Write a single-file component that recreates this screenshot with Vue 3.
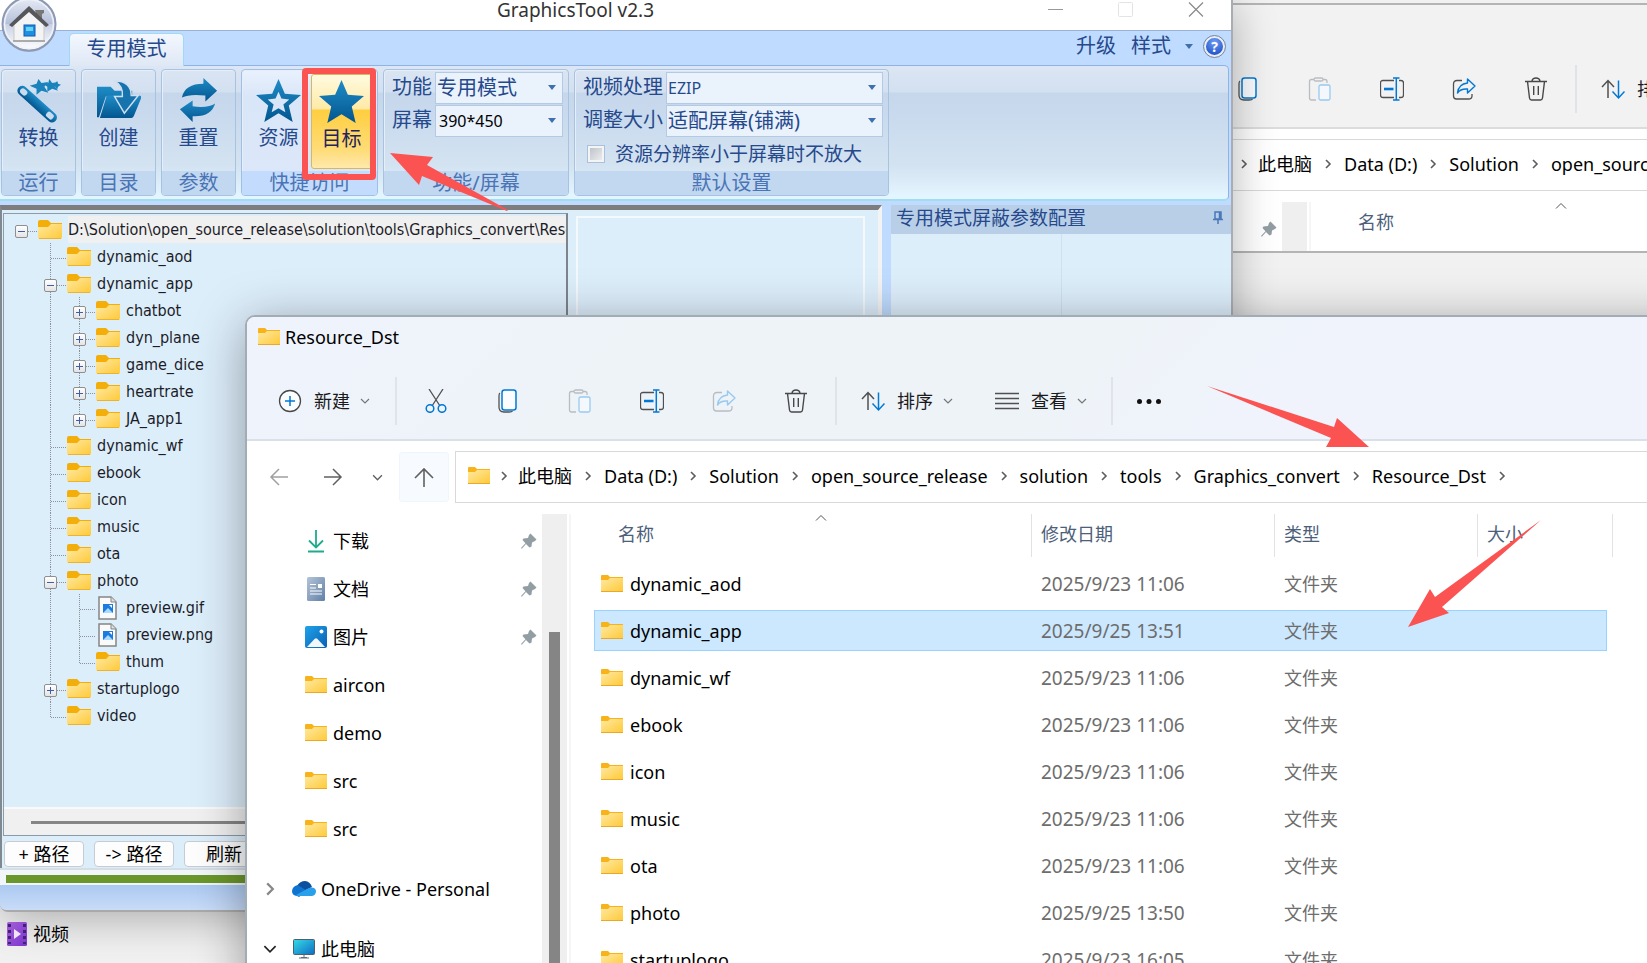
<script setup>
import { ref } from 'vue'

const ribbonGroups = [
  { caption: '运行', buttons: [{ icon: 'wand', label: '转换' }] },
  { caption: '目录', buttons: [{ icon: 'create', label: '创建' }] },
  { caption: '参数', buttons: [{ icon: 'reset', label: '重置' }] },
  {
    caption: '快捷访问',
    active: true,
    buttons: [
      { icon: 'star-outline', label: '资源' },
      { icon: 'star', label: '目标', hot: true },
    ],
  },
]

// Guide codes: blank ' ', through line '|', branch 't', last branch 'l',
// and for expanders: root 'r', mid-level '-' / '+', last in its level 'L'.
const tree = [
  { guides: 'r', icon: 'tree-folder', name: 'D:\\Solution\\open_source_release\\solution\\tools\\Graphics_convert\\Resource_Dst', root: true },
  { guides: ' t', icon: 'tree-folder', name: 'dynamic_aod' },
  { guides: ' -', icon: 'tree-folder', name: 'dynamic_app' },
  { guides: ' |+', icon: 'tree-folder', name: 'chatbot' },
  { guides: ' |+', icon: 'tree-folder', name: 'dyn_plane' },
  { guides: ' |+', icon: 'tree-folder', name: 'game_dice' },
  { guides: ' |+', icon: 'tree-folder', name: 'heartrate' },
  { guides: ' |L', icon: 'tree-folder', name: 'JA_app1' },
  { guides: ' t', icon: 'tree-folder', name: 'dynamic_wf' },
  { guides: ' t', icon: 'tree-folder', name: 'ebook' },
  { guides: ' t', icon: 'tree-folder', name: 'icon' },
  { guides: ' t', icon: 'tree-folder', name: 'music' },
  { guides: ' t', icon: 'tree-folder', name: 'ota' },
  { guides: ' -', icon: 'tree-folder', name: 'photo' },
  { guides: ' |t', icon: 'image-file', name: 'preview.gif' },
  { guides: ' |t', icon: 'image-file', name: 'preview.png' },
  { guides: ' |l', icon: 'tree-folder', name: 'thum' },
  { guides: ' +', icon: 'tree-folder', name: 'startuplogo' },
  { guides: ' l', icon: 'tree-folder', name: 'video' },
]
const isExpander = (g) => 'r-+L'.includes(g)
const isPlus = (g) => '+L'.includes(g)

const path = ['此电脑', 'Data (D:)', 'Solution', 'open_source_release', 'solution', 'tools', 'Graphics_convert', 'Resource_Dst']
const quick = [
  { icon: 'download', name: '下载', pin: true },
  { icon: 'document', name: '文档', pin: true },
  { icon: 'picture', name: '图片', pin: true },
  { icon: 'folder', name: 'aircon' },
  { icon: 'folder', name: 'demo' },
  { icon: 'folder', name: 'src' },
  { icon: 'folder', name: 'src' },
]
const files = [
  { name: 'dynamic_aod', date: '2025/9/23 11:06' },
  { name: 'dynamic_app', date: '2025/9/25 13:51', selected: true },
  { name: 'dynamic_wf', date: '2025/9/23 11:06' },
  { name: 'ebook', date: '2025/9/23 11:06' },
  { name: 'icon', date: '2025/9/23 11:06' },
  { name: 'music', date: '2025/9/23 11:06' },
  { name: 'ota', date: '2025/9/23 11:06' },
  { name: 'photo', date: '2025/9/25 13:50' },
  { name: 'startuplogo', date: '2025/9/23 16:05' },
]
const explorers = [
  { id: 'back', path: path.slice(0, 4), quick: [{ icon: 'folder', name: '', pin: true }], files: [], canShare: true },
  { id: 'front', path, quick, files, canShare: false },
]
const tools = (win) => [
  { icon: 'cut', label: '剪切' },
  { icon: 'copy', label: '复制' },
  { icon: 'paste', label: '粘贴', off: true },
  { icon: 'rename', label: '重命名' },
  { icon: 'share', label: '共享', off: !win.canShare },
  { icon: 'trash', label: '删除' },
]

const mode = ref('专用模式')
const screen = ref('390*450')
const codec = ref('EZIP')
const fit = ref('适配屏幕(铺满)')
const keepSize = ref(false)
</script>

<template>
  <svg class="defs" aria-hidden="true">
    <defs>
      <linearGradient id="g-blue" x1="0" y1="0" x2="0" y2="1"><stop offset="0" stop-color="#1f8cc6" /><stop offset="1" stop-color="#03558f" /></linearGradient>
      <linearGradient id="g-folder" x1="0" y1="0" x2="1" y2="1"><stop offset="0" stop-color="#ffe9a2" /><stop offset="1" stop-color="#ffc937" /></linearGradient>
      <linearGradient id="g-doc" x1="0" y1="0" x2="1" y2="1"><stop offset="0" stop-color="#b4c4d8" /><stop offset="1" stop-color="#6080a6" /></linearGradient>
      <linearGradient id="g-pic" x1="0" y1="0" x2="1" y2="1"><stop offset="0" stop-color="#1fa3ea" /><stop offset="1" stop-color="#0a5fb4" /></linearGradient>
      <linearGradient id="g-pc" x1="0" y1="0" x2="1" y2="1"><stop offset="0" stop-color="#35dbe6" /><stop offset="1" stop-color="#0f6cc4" /></linearGradient>
      <linearGradient id="g-video" x1="0" y1="0" x2="1" y2="1"><stop offset="0" stop-color="#a45fd6" /><stop offset="1" stop-color="#7a35cf" /></linearGradient>
      <linearGradient id="g-orb" x1="0" y1="0" x2="0" y2="1"><stop offset="0" stop-color="#e8ecf6" /><stop offset="0.5" stop-color="#b4bfd8" /><stop offset="0.51" stop-color="#c9d2e6" /><stop offset="1" stop-color="#ffffff" /></linearGradient>
    </defs>
    <symbol id="orb" viewBox="0 0 58 58">
      <circle cx="29" cy="30" r="27" fill="#7f8798" opacity="0.5" />
      <circle cx="29" cy="29" r="26.5" fill="url(#g-orb)" stroke="#8d99b0" stroke-width="2" />
      <circle cx="29" cy="29" r="24.500" fill="none" stroke="#eef2fa" stroke-width="1.500" />
      <path d="M14 29 29 15l15 14v17H14Z" fill="#f4f4f4" stroke="#c9c9c9" />
      <path d="M35 15h9v3l-2 1v8l-5-5Z" fill="#777" />
      <path d="M9 30 29 11l20 19-3 2-17-15-17 15Z" fill="#55575a" />
      <path d="M13 46h32" stroke="#9a9a9a" stroke-width="1.500" />
      <rect x="24" y="30" width="11" height="11" fill="#1f8fe0" stroke="#1458b0" />
      <rect x="26" y="32" width="7" height="4" fill="#68d2f6" />
    </symbol>
    <symbol id="wand" viewBox="0 0 46 46">
      <g transform="rotate(42 22 27)">
        <rect x="-4" y="22" width="51" height="10" rx="5" fill="url(#g-blue)" />
        <rect x="-1" y="24" width="8" height="6" rx="3" fill="#c9dbee" />
        <rect x="35" y="24" width="8" height="6" rx="2" fill="#c9dbee" />
      </g>
      <g fill="#1a82bc">
        <path d="m23 1 3 4 7-1-4 5 4 6-7-2-5 4 0-6-7-3 7-2Z" />
        <path d="m34 1 3 4 6-1-4 4 4 5-6-2-5 3 0-5-4-3 5-1Z" />
        <path d="m42 3 1 3 3 1-3 2-1 3-2-3-3-1 3-2Z" />
      </g>
    </symbol>
    <symbol id="create" viewBox="0 0 46 46">
      <path d="M1 9h14l4 4h18v6H10L3 40H1Z" fill="url(#g-blue)" />
      <path d="M11 18h33q3 0 2 3l-7 17q-1 3-4 3H4Z" fill="url(#g-blue)" />
      <path d="M19 3q17 0 17 15h7L29 36 19 19h8q1-11-8-16Z" fill="#1673ad" stroke="#cfdff0" stroke-width="1.500" />
    </symbol>
    <symbol id="reset" viewBox="0 0 46 46">
      <path d="M6 20Q9 6 28 6V0l14 13-12 11v-6Q14 16 6 20Z" fill="url(#g-blue)" />
      <path d="M40 26Q36 40 17 39v6L4 32l13-9v6q16 2 23-3Z" fill="url(#g-blue)" />
    </symbol>
    <symbol id="star" viewBox="0 0 46 46">
      <path d="m23 1 6.500 15L46 17.500 33.500 28 37.500 45 23 36 8.500 45l4-17L0 17.500 16.500 16Z" fill="url(#g-blue)" />
    </symbol>
    <symbol id="star-outline" viewBox="0 0 46 46">
      <path fill-rule="evenodd" d="m23 1 6.500 15L46 17.500 33.500 28 37.500 45 23 36 8.500 45l4-17L0 17.500 16.500 16ZM23 14l-3 7-8 1 6 5-2 8 7-4 7 4-2-8 6-5-8-1Z" fill="url(#g-blue)" />
    </symbol>
    <symbol id="pushpin" viewBox="0 0 12 14">
      <path d="M3 1h6v7H3ZM1 8.500h10M6 9v4M7.500 1v7" fill="none" stroke="#4a78b8" stroke-width="1.500" />
    </symbol>
    <symbol id="tree-folder" viewBox="0 0 24 20">
      <path d="M0 2q0-2 2-2h8l3 3h11v6H0Z" fill="#f4ae0a" />
      <path d="M0 7h10l3-3h11v13q0 2-2 2H2q-2 0-2-2Z" fill="url(#g-folder)" />
      <path d="M1 18.500h22" stroke="#eeb32c" />
    </symbol>
    <symbol id="folder" viewBox="0 0 22 18">
      <path d="M0 1q0-1 1-1h6l2 2h13v5H0Z" fill="#f8b31a" />
      <path d="M0 5h7l2-2h13v14H0Z" fill="url(#g-folder)" />
      <path d="M0 16.500h22" stroke="#e9a827" />
    </symbol>
    <symbol id="image-file" viewBox="0 0 24 24">
      <path d="M3 1h12l5 5v17H3Z" fill="#fafafa" stroke="#858585" stroke-width="1.500" />
      <path d="M15 1v5h5" fill="#ddd" stroke="#858585" />
      <rect x="7" y="8" width="10" height="9" fill="#1c7be0" />
      <path d="m7 17 5-5 5 5Z" fill="#a8dcff" />
      <path d="M13 9h3v3Z" fill="#fff" />
    </symbol>
    <symbol id="plus-circle" viewBox="0 0 24 24">
      <circle cx="12" cy="12" r="10.500" fill="#fafcff" stroke="#484848" stroke-width="1.300" />
      <path d="M12 7v10M7 12h10" stroke="#0078d4" stroke-width="1.500" />
    </symbol>
    <symbol id="cut" viewBox="0 0 24 24" fill="none">
      <path d="m5 0 11 17M19 0 8 17" stroke="#505050" stroke-width="1.300" />
      <circle cx="6" cy="19.500" r="3.800" stroke="#0078d4" stroke-width="1.500" />
      <circle cx="18" cy="19.500" r="3.800" stroke="#0078d4" stroke-width="1.500" />
    </symbol>
    <symbol id="copy" viewBox="0 0 24 24" fill="none">
      <path d="M4 4q-1 .5-1 3v11q0 5 5 5h5q3 0 3.500-1" stroke="#505050" stroke-width="1.300" />
      <rect x="6" y="1" width="14" height="20" rx="2.500" fill="#fafcff" stroke="#0078d4" stroke-width="1.500" />
    </symbol>
    <symbol id="paste" viewBox="0 0 24 24" fill="none">
      <path d="M8 23H3.500q-2 0-2-2V4.500q0-2 2-2H6M15 2.500h2q2 0 2 2V6" stroke="#b9bdc2" stroke-width="1.300" />
      <rect x="6" y="1" width="9" height="3" rx="1.500" stroke="#b9bdc2" stroke-width="1.300" />
      <rect x="11" y="8" width="11" height="15" rx="1.500" fill="#f4f8fd" stroke="#99c9ee" stroke-width="1.300" />
    </symbol>
    <symbol id="rename" viewBox="0 0 24 24" fill="none">
      <path d="M14 3.500H3q-2.500 0-2.500 2.500v12Q.5 20.500 3 20.500h11M19 3.500h2q2.500 0 2.500 2.500v12q0 2.500-2.500 2.500h-2" stroke="#505050" stroke-width="1.300" />
      <path d="M13 1h6.500M13 23h6.500M16.300 1v22" stroke="#0078d4" stroke-width="1.500" />
      <path d="M4 12h9.500" stroke="#0078d4" stroke-width="2.600" />
    </symbol>
    <symbol id="share" viewBox="0 0 24 24" fill="none">
      <path d="M10 3.500H5Q1.500 3.500 1.500 7v12q0 3 3 3h12q3.500 0 3.500-3v-2" stroke="#505050" stroke-width="1.300" />
      <path d="m15.500 2 7.500 7-7.500 7v-4q-7-.5-10 4 1-9 10-10Z" stroke="#0078d4" stroke-width="1.400" stroke-linejoin="round" />
    </symbol>
    <symbol id="share-off" viewBox="0 0 24 24" fill="none">
      <path d="M10 3.500H5Q1.500 3.500 1.500 7v12q0 3 3 3h12q3.500 0 3.500-3v-2" stroke="#b9bdc2" stroke-width="1.300" />
      <path d="m15.500 2 7.500 7-7.500 7v-4q-7-.5-10 4 1-9 10-10Z" stroke="#99c9ee" stroke-width="1.400" stroke-linejoin="round" />
    </symbol>
    <symbol id="trash" viewBox="0 0 24 24" fill="none" stroke="#484848" stroke-width="1.400">
      <path d="M1 4.500h22M3.500 4.500l2 16.500q.3 2 2 2h9q1.700 0 2-2l2-16.500M8 4q.5-3 4-3t4 3M9.700 9v9M14.300 9v9" />
    </symbol>
    <symbol id="sort" viewBox="0 0 24 24" fill="none" stroke-width="1.500">
      <path d="M7 21V4M1 10l6-6.500 6 6.500" stroke="#505050" />
      <path d="M17.500 3.500V21M11.500 14.500l6 6.500 6-6.500" stroke="#0078d4" />
    </symbol>
    <symbol id="lines" viewBox="0 0 24 24">
      <path d="M0 4.500h24M0 9.500h24M0 14.500h24M0 19.500h24" stroke="#505050" stroke-width="1.500" />
    </symbol>
    <symbol id="dots" viewBox="0 0 24 24"><g fill="#111"><circle cx="2.500" cy="12.500" r="2.500" /><circle cx="12" cy="12.500" r="2.500" /><circle cx="21.500" cy="12.500" r="2.500" /></g></symbol>
    <symbol id="chev-down" viewBox="0 0 10 10"><path d="m1 3 4 4 4-4" fill="none" stroke="currentColor" stroke-width="1.200" /></symbol>
    <symbol id="chev-right" viewBox="0 0 10 10"><path d="m3 1 4 4-4 4" fill="none" stroke="currentColor" stroke-width="1.600" /></symbol>
    <symbol id="arrow-left" viewBox="0 0 20 20"><path d="M19 10H2M10 2l-8 8 8 8" fill="none" stroke="currentColor" stroke-width="1.500" /></symbol>
    <symbol id="arrow-right" viewBox="0 0 20 20"><path d="M1 10h17M10 2l8 8-8 8" fill="none" stroke="currentColor" stroke-width="1.500" /></symbol>
    <symbol id="arrow-up" viewBox="0 0 20 20"><path d="M10 20V2M1 11l9-9 9 9" fill="none" stroke="currentColor" stroke-width="1.600" /></symbol>
    <symbol id="pin" viewBox="0 0 16 16">
      <path d="m9.500.5 6 6-1.500 1.500-3 1.500-.500 4-2 1L5 11 .8 15.800 0 15l4.500-4.800L1.500 7l1-1.500 4.500-.5 1-3Z" fill="#929da4" />
    </symbol>
    <symbol id="download" viewBox="0 0 22 24">
      <path d="M11 1v17M4 11.500l7 7 7-7M3 22.500h16" fill="none" stroke="#1fab8c" stroke-width="1.800" />
    </symbol>
    <symbol id="document" viewBox="0 0 22 24">
      <rect x="2" width="18" height="24" rx="1.500" fill="url(#g-doc)" />
      <path d="M5 7.500h6M5 11h6M5 14h12M5 17h12" stroke="#fff" stroke-width="1.200" />
      <rect x="13" y="7" width="4" height="4" fill="#fff" />
    </symbol>
    <symbol id="picture" viewBox="0 0 22 22">
      <rect width="22" height="22" rx="2" fill="url(#g-pic)" />
      <path d="m2 21 7.500-8q1.500-1.500 3 0L20 21Z" fill="#f2f7fc" />
      <circle cx="16.500" cy="5.500" r="2" fill="#fff" />
    </symbol>
    <symbol id="cloud" viewBox="0 0 24 16">
      <path d="M5 5Q8 0 13 0q5 .5 7 6l-8 4Z" fill="#0a4fa0" />
      <path d="M5 15q-5-.5-5-5 .5-5 6-6l9 6-8 6Z" fill="#0f74d0" />
      <path d="m4 14 11-6q3-2 5-1.500 4 .5 4 4-.5 4-4 4.500H7q-2 0-3-1Z" fill="#2a9fea" />
    </symbol>
    <symbol id="pc" viewBox="0 0 22 20">
      <rect x=".5" y=".5" width="21" height="15" rx="1" fill="url(#g-pc)" stroke="#4d6070" />
      <path d="M8 18.500h6M6 19h10M11 16v3" stroke="#5f6f7a" />
    </symbol>
    <symbol id="video" viewBox="0 0 20 24">
      <rect width="20" height="24" rx="1.500" fill="url(#g-video)" />
      <path d="M2.500 2v20M17.500 2v20" stroke="#42207a" stroke-width="3" stroke-dasharray="3 3" />
      <path d="m7 7 7 5-7 5Z" fill="#efe6fa" />
    </symbol>
  </svg>

  <main class="desktop">
    <a class="desk-item" href="#"><svg width="20" height="24"><use href="#video" /></svg>视频</a>

    <section v-for="win in explorers" :key="win.id" class="explorer" :class="win.id">
      <header class="ex-head">
        <div class="ex-title"><svg width="22" height="18"><use href="#folder" /></svg><span v-if="win.files.length">Resource_Dst</span></div>
        <div class="ex-tools">
          <button class="ex-menu new"><svg width="24" height="24"><use href="#plus-circle" /></svg><template v-if="win.files.length">新建</template><svg class="chev" width="10" height="10"><use href="#chev-down" /></svg></button>
          <i class="sep"></i>
          <button v-for="t in tools(win)" :key="t.icon" class="tool" :disabled="t.off" :aria-label="t.label">
            <svg width="24" height="24"><use :href="t.icon === 'share' && t.off ? '#share-off' : '#' + t.icon" /></svg>
          </button>
          <i class="sep"></i>
          <button class="ex-menu sort"><svg width="24" height="24"><use href="#sort" /></svg>排序<svg class="chev" width="10" height="10"><use href="#chev-down" /></svg></button>
          <template v-if="win.files.length">
            <button class="ex-menu view"><svg width="24" height="24"><use href="#lines" /></svg>查看<svg class="chev" width="10" height="10"><use href="#chev-down" /></svg></button>
            <i class="sep"></i>
            <button class="tool more" aria-label="更多"><svg width="24" height="24"><use href="#dots" /></svg></button>
          </template>
        </div>
      </header>

      <nav class="ex-nav">
        <button class="nav-btn faint" aria-label="后退"><svg width="20" height="20"><use href="#arrow-left" /></svg></button>
        <button class="nav-btn" aria-label="前进"><svg width="20" height="20"><use href="#arrow-right" /></svg></button>
        <button class="nav-btn small" aria-label="最近"><svg width="11" height="11"><use href="#chev-down" /></svg></button>
        <button class="nav-btn up" aria-label="向上"><svg width="20" height="20"><use href="#arrow-up" /></svg></button>
        <div class="address">
          <svg width="22" height="18"><use href="#folder" /></svg>
          <svg class="crumb-chev lead" width="10" height="10"><use href="#chev-right" /></svg>
          <template v-for="p in win.path" :key="p">
            <a href="#">{{ p }}</a>
            <svg class="crumb-chev" width="10" height="10"><use href="#chev-right" /></svg>
          </template>
        </div>
      </nav>

      <div class="ex-body">
        <aside class="side">
          <a v-for="(q, i) in win.quick" :key="i" class="side-row" href="#">
            <svg width="22" height="24"><use :href="'#' + q.icon" /></svg><span>{{ q.name }}</span>
            <svg v-if="q.pin" class="pin" width="16" height="16"><use href="#pin" /></svg>
          </a>
          <template v-if="win.files.length">
            <a class="side-row drive" href="#">
              <svg class="twist" width="14" height="14"><use href="#chev-right" /></svg>
              <svg width="24" height="16"><use href="#cloud" /></svg><span>OneDrive - Personal</span>
            </a>
            <a class="side-row drive" href="#">
              <svg class="twist open" width="14" height="14"><use href="#chev-down" /></svg>
              <svg width="24" height="20"><use href="#pc" /></svg><span>此电脑</span>
            </a>
          </template>
        </aside>
        <div class="track"><div class="thumb"></div></div>
        <div class="list">
          <table>
            <colgroup><col class="c-name" /><col class="c-date" /><col class="c-type" /><col class="c-size" /></colgroup>
            <thead>
              <tr>
                <th class="first">名称<svg class="caret" width="12" height="8" viewBox="0 0 12 8"><path d="m1 6.500 5-5 5 5" fill="none" stroke="#555" /></svg></th>
                <template v-if="win.files.length"><th>修改日期</th><th>类型</th><th>大小</th></template>
              </tr>
            </thead>
            <tbody>
              <tr v-for="f in win.files" :key="f.name" :class="{ selected: f.selected }">
                <td class="name"><div><svg width="22" height="18"><use href="#folder" /></svg>{{ f.name }}</div></td>
                <td class="date">{{ f.date }}</td>
                <td>文件夹</td>
                <td></td>
              </tr>
            </tbody>
          </table>
        </div>
      </div>
    </section>

    <section class="app">
      <header class="titlebar">
        <h1>GraphicsTool v2.3</h1>
        <button class="win-btn" aria-label="最小化"><svg width="16" height="16"><path d="M0 8.500h15" stroke="#999" /></svg></button>
        <button class="win-btn" aria-label="最大化"><svg width="16" height="16"><rect x=".5" y="1.500" width="14" height="14" rx="1" fill="none" stroke="#e3e3e3" /></svg></button>
        <button class="win-btn" aria-label="关闭"><svg width="16" height="16"><path d="m1 1.500 14 14M15 1.500l-14 14" stroke="#8a8a8a" stroke-width="1.200" /></svg></button>
      </header>
      <button class="orb" aria-label="主菜单"><svg width="58" height="58"><use href="#orb" /></svg></button>

      <div class="tabs">
        <button class="tab">专用模式</button>
        <div class="tab-extra">
          <button>升级</button>
          <button class="style-btn">样式<i class="tri"></i></button>
          <button class="help" aria-label="帮助">?</button>
        </div>
      </div>

      <div class="ribbon">
        <section v-for="g in ribbonGroups" :key="g.caption" class="group" :class="{ active: g.active }">
          <div class="group-body">
            <button v-for="b in g.buttons" :key="b.label" class="big" :class="{ hot: b.hot }">
              <svg width="45" height="45"><use :href="'#' + b.icon" /></svg>{{ b.label }}
            </button>
          </div>
          <footer>{{ g.caption }}</footer>
        </section>

        <section class="group g-screen">
          <div class="fields">
            <label for="f-mode">功能</label>
            <div class="combo"><select id="f-mode" v-model="mode"><option>专用模式</option></select><i class="tri"></i></div>
            <label for="f-screen">屏幕</label>
            <div class="combo"><select id="f-screen" v-model="screen" class="num"><option>390*450</option></select><i class="tri"></i></div>
          </div>
          <footer>功能/屏幕</footer>
        </section>

        <section class="group g-default">
          <div class="fields">
            <label for="f-codec">视频处理</label>
            <div class="combo"><select id="f-codec" v-model="codec" class="latin"><option>EZIP</option></select><i class="tri"></i></div>
            <label for="f-fit">调整大小</label>
            <div class="combo"><select id="f-fit" v-model="fit"><option>适配屏幕(铺满)</option></select><i class="tri"></i></div>
            <label class="check"><input v-model="keepSize" type="checkbox" />资源分辨率小于屏幕时不放大</label>
          </div>
          <footer>默认设置</footer>
        </section>
      </div>

      <div class="client">
        <div class="tree-col">
          <div class="tree-box">
            <ul class="tree">
              <li v-for="n in tree" :key="n.name" :class="{ root: n.root }">
                <span v-for="(g, i) in n.guides" :key="i" class="cell">
                  <svg width="29" height="27" fill="none" stroke="#8c9299" stroke-dasharray="1 1">
                    <path v-if="'|t-+'.includes(g)" d="M13.500 0v27" />
                    <path v-if="'lL'.includes(g)" d="M13.500 0v15" />
                    <path v-if="'tlr-+L'.includes(g)" d="M14 15.500h15" />
                  </svg>
                  <button v-if="isExpander(g)" class="twisty" :aria-label="isPlus(g) ? '展开' : '折叠'">
                    <svg width="9" height="9"><path d="M1 4.500h7" stroke="#3f5fa8" /><path v-if="isPlus(g)" d="M4.500 1v7" stroke="#3f5fa8" /></svg>
                  </button>
                </span>
                <svg class="node-icon" width="24" :height="n.icon === 'image-file' ? 24 : 20"><use :href="'#' + n.icon" /></svg>
                <span class="node-name">{{ n.name }}</span>
              </li>
            </ul>
            <div class="hscroll"><div></div></div>
          </div>
          <div class="path-btns">
            <button>+ 路径</button>
            <button>-&gt; 路径</button>
            <button>刷新</button>
          </div>
        </div>
        <div class="preview"><div></div></div>
        <div class="config">
          <header>专用模式屏蔽参数配置<svg width="12" height="14"><use href="#pushpin" /></svg></header>
          <div class="config-body"><div></div><div></div></div>
        </div>
      </div>
      <div class="progress"><div></div></div>
      <div class="status"></div>
    </section>

    <svg class="marks" aria-hidden="true">
      <rect x="305" y="71" width="68" height="106" rx="1" fill="none" stroke="#fb5352" stroke-width="6" />
      <g fill="#fb5352">
        <path d="M390 153l43 4-6 8 81 45-1 1-85-35-3 9Z" />
        <path d="M1207 386l127 41 3-9 32 29-43 0 5-9Z" />
        <path d="M1541 520l-99 87 7 6-41 14 22-38 5 8Z" />
      </g>
    </svg>
  </main>
</template>

<style>
body {
  margin: 0;
  overflow: hidden;
}
</style>

<style scoped>
* {
  box-sizing: border-box;
}
button {
  border: 0;
  padding: 0;
  margin: 0;
  background: none;
  font: inherit;
  color: inherit;
}
a {
  color: inherit;
  text-decoration: none;
}
svg {
  display: block;
  flex: none;
}
.defs {
  position: absolute;
  width: 0;
  height: 0;
}
.desktop {
  position: relative;
  height: 100vh;
  overflow: hidden;
  background: #f1f1f1;
  font: 18px/24px "Noto Sans", "Noto Sans CJK SC", sans-serif;
  color: #000;
}
.desk-item {
  position: absolute;
  left: 7px;
  top: 922px;
  display: flex;
  gap: 6px;
  z-index: 2;
}
.marks {
  position: absolute;
  inset: 0;
  width: 100%;
  height: 100%;
  z-index: 5;
  pointer-events: none;
}

/* Explorer windows */
.explorer {
  position: absolute;
  width: 100vw;
  border: 2px solid #b4b4b4;
  background: #fff;
  overflow: hidden;
}
.explorer.back {
  left: 985px;
  top: 3px;
  height: 250px;
}
.explorer.front {
  left: 245px;
  top: 315px;
  height: 1000px;
  border-color: #a2acb4;
  border-radius: 10px;
  box-shadow: 0 8px 50px rgba(0, 0, 0, 0.36);
  z-index: 3;
}
.ex-head {
  height: 124px;
  border-bottom: 2px solid #dcdcdc;
  background: #f2f2f2;
}
.front .ex-head {
  border-color: #dae0e7;
  background: linear-gradient(135deg, #eff3fc 0, #eef3f8 25%, #eef3f8 50%, #f0f3fc 65%);
}
.ex-title {
  display: flex;
  align-items: center;
  gap: 5px;
  height: 40px;
  padding-left: 11px;
}
.ex-tools {
  display: flex;
  align-items: center;
  height: 48px;
  margin-top: 20px;
}
.sep {
  width: 2px;
  height: 48px;
  background: #e0e4ea;
}
.tool {
  display: flex;
  justify-content: center;
  width: 72px;
}
.sep + .tool {
  margin-left: 3px;
}
.tool + .sep {
  margin-left: 3px;
}
.tool.more {
  width: 66px;
}
.ex-menu {
  display: flex;
  align-items: center;
  color: #1a1a1a;
}
.ex-menu > svg:first-child {
  margin-right: 12px;
}
.chev {
  margin-left: 10px;
  color: #777;
}
.ex-menu.new {
  width: 148px;
  padding-left: 31px;
}
.ex-menu.sort {
  width: 133px;
  padding-left: 24px;
}
.ex-menu.view {
  width: 141px;
  padding-left: 25px;
}
.ex-nav {
  display: flex;
  align-items: center;
  height: 72px;
}
.nav-btn {
  display: flex;
  align-items: center;
  justify-content: center;
  width: 54px;
  height: 50px;
  color: #606060;
}
.nav-btn:first-child {
  margin-left: 5px;
}
.nav-btn.faint {
  color: #a0a0a0;
}
.nav-btn.small {
  width: 34px;
}
.nav-btn.up {
  width: 50px;
  margin: 0 6px 0 5px;
  background: #f7fbff;
  border: 1px solid #eef6fd;
  border-radius: 3px;
}
.address {
  display: flex;
  flex: 1;
  align-items: center;
  height: 52px;
  padding: 0 0 2px 12px;
  border: 1px solid #d9d9d9;
  white-space: nowrap;
}
.crumb-chev {
  margin: 0 11px;
  color: #5c5c5c;
}
.crumb-chev.lead {
  margin: 0 9px;
}
.ex-body {
  display: flex;
  height: 800px;
}
.side {
  width: 295px;
  padding-top: 4px;
}
.side-row {
  display: flex;
  align-items: center;
  gap: 6px;
  height: 48px;
  padding-left: 58px;
}
.side-row .pin {
  margin-left: auto;
  margin-right: 5px;
}
.drive {
  gap: 5px;
  height: 60px;
  margin-top: 6px;
  padding-left: 16px;
}
.drive + .drive {
  margin-top: 0;
}
.twist {
  margin-right: 10px;
  color: #888;
}
.twist.open {
  color: #222;
}
.track {
  width: 25px;
  margin-top: 1px;
  padding-top: 118px;
  background: #efefef;
}
.thumb {
  width: 11px;
  height: 700px;
  margin-left: 7px;
  background: #858585;
}
.list {
  flex: 1;
  margin: 1px 0 0 2px;
  padding-left: 23px;
  border-left: 2px solid #f6f6f6;
}
table {
  width: 1013px;
  table-layout: fixed;
  border-collapse: separate;
  border-spacing: 0 6px;
  margin-top: -6px;
}
.c-name {
  width: 437px;
}
.c-date {
  width: 243px;
}
.c-type {
  width: 203px;
}
th {
  position: relative;
  height: 43px;
  padding: 0 0 3px 9px;
  border-left: 1px solid #e2e2e2;
  font-weight: 400;
  text-align: left;
  color: #4c607a;
}
th.first {
  border-left: 0;
  padding-left: 24px;
}
th:last-child:not(.first)::after {
  content: "";
  position: absolute;
  right: -6px;
  top: 0;
  height: 100%;
  border-right: 1px solid #e2e2e2;
}
.caret {
  position: absolute;
  left: 221px;
  top: 0;
}
td {
  height: 41px;
  padding: 0 0 0 10px;
  border: solid transparent;
  border-width: 1px 0;
  color: #6d6d6d;
}
td.name {
  padding-left: 6px;
  border-left-width: 1px;
  color: #000;
}
td:last-child {
  border-right-width: 1px;
}
td.name div {
  display: flex;
  align-items: center;
  gap: 7px;
}
td.date {
  font-size: 19px;
}
.selected td {
  background: #cce8ff;
  border-color: #99d1ff;
}

/* Graphics tool window */
.app {
  position: absolute;
  left: 0;
  top: 0;
  display: flex;
  flex-direction: column;
  width: 1233px;
  height: 912px;
  border-right: 2px solid #a9adb3;
  border-bottom: 2px solid #a9a9a9;
  border-bottom-left-radius: 8px;
  background: #bfdbff;
  box-shadow: 0 6px 44px rgba(0, 0, 0, 0.3);
  color: #26498c;
  font-size: 20px;
  z-index: 1;
}
.titlebar {
  display: flex;
  height: 31px;
  padding-left: 130px;
  background: #fff;
  border-bottom: 1px solid #9cb0cf;
}
h1 {
  flex: 1;
  margin: 0;
  font-size: 19px;
  font-weight: 400;
  line-height: 20px;
  text-align: center;
  color: #333;
}
.win-btn {
  display: flex;
  justify-content: center;
  width: 70px;
  padding-top: 1px;
}
.orb {
  position: absolute;
  left: 0;
  top: -5px;
}
.tabs {
  display: flex;
  justify-content: space-between;
  height: 34px;
  padding-left: 69px;
}
.tab {
  width: 115px;
  height: 33px;
  margin-top: 2px;
  padding-bottom: 2px;
  border: 1px solid #9fd9f5;
  border-bottom: 0;
  border-radius: 5px 5px 0 0;
  background: linear-gradient(#f3f8ff, #dfe8f5);
  position: relative;
  z-index: 1;
}
.tab-extra {
  display: flex;
  align-items: center;
  padding: 0 6px 4px 0;
}
.style-btn {
  display: flex;
  align-items: center;
  gap: 14px;
  margin: 0 11px 0 15px;
}
.tri {
  border: 4px solid transparent;
  border-top: 5px solid #3f70ad;
  border-bottom: 0;
}
.help {
  width: 21px;
  height: 21px;
  border: 2px solid #e9eef8;
  border-radius: 50%;
  outline: 1px solid #7c8796;
  background: radial-gradient(circle at 50% 25%, #6f9df5, #1244c0);
  color: #fff;
  font-size: 14px;
  font-weight: 700;
  line-height: 17px;
}
.ribbon {
  display: flex;
  gap: 5px;
  height: 136px;
  margin-right: 2px;
  padding: 3px 1px;
  border: 1px solid #8fb3e6;
  border-left: 0;
  border-bottom: 2px solid #a2dcf0;
  border-radius: 0 5px 5px 0;
  background: linear-gradient(#dce6f4, #d3e0f0 26px, #c6d7ec 27px, #c9daee 50px, #d3e3f1 100px, #e3f5ff 130px);
}
.group {
  display: flex;
  flex-direction: column;
  min-width: 75px;
  border: 1px solid #a8c3df;
  border-radius: 4px;
  box-shadow: inset 1px 1px 0 #e6eff9;
  overflow: hidden;
}
.group.active {
  width: 137px;
  background: linear-gradient(#e9f1fd, #d9e6f8 27px, #dce8fa);
  border-color: #9fc0e4;
}
.group footer {
  height: 24px;
  background: #c1d8f0;
  color: #4a74b5;
  line-height: 23px;
  text-align: center;
}
.group.active footer {
  background: #c3dcfd;
}
.group-body {
  display: flex;
  flex: 1;
  justify-content: center;
}
.big {
  display: flex;
  flex-direction: column;
  align-items: center;
  width: 64px;
  padding-top: 8px;
}
.big svg {
  margin-bottom: 3px;
}
.big.hot {
  width: 62px;
  margin: 4px 0 2px;
  padding-top: 4px;
  border: 1px solid #d8b85f;
  border-radius: 3px;
  background: linear-gradient(#fffbe0, #ffe9a6 34px, #ffce3f 35px, #ffdc78 75px, #ffe9ac);
  color: #23235e;
}
.fields {
  display: grid;
  grid-template-columns: auto 1fr;
  grid-auto-rows: 32px;
  align-content: start;
  column-gap: 3px;
  row-gap: 1px;
  flex: 1;
  padding: 2px 5px 0 8px;
}
.fields label {
  line-height: 29px;
}
.g-screen {
  width: 186px;
}
.g-default {
  width: 315px;
}
.combo {
  position: relative;
}
.combo select {
  appearance: none;
  width: 100%;
  height: 32px;
  padding: 0 20px 1px 1px;
  border: 1px solid #b3c9e4;
  border-radius: 0;
  background: #eaf2fc;
  color: #26498c;
  font: inherit;
}
.combo .tri {
  position: absolute;
  right: 7px;
  top: 13px;
}
.combo select.num {
  padding-left: 3px;
  color: #000;
  font-size: 16px;
}
.combo select.latin {
  font-size: 16px;
}
.fields .check {
  grid-column: 1 / 3;
  display: flex;
  align-items: center;
  gap: 10px;
  padding-left: 4px;
  white-space: nowrap;
  font-size: 19px;
}
.check input {
  appearance: none;
  width: 18px;
  height: 18px;
  margin: 0;
  border: 1px solid #aac1de;
  box-shadow: inset 0 0 0 2px #f4f4f4;
  background: linear-gradient(135deg, #b8bdc4, #f2f2f2);
}
.client {
  display: flex;
  flex: 1;
  min-height: 0;
  margin-top: 4px;
}
.tree-col {
  display: flex;
  flex-direction: column;
  width: 568px;
  border-left: 2px solid #808890;
  border-top: 5px solid #7d7d7d;
  background: #ddeefb;
}
.tree-box {
  display: flex;
  flex-direction: column;
  flex: 1;
  min-height: 0;
  margin: 3px 0 0 1px;
  border: 1px solid #8d9aa8;
  border-right: 2px solid #7d848b;
}
.tree {
  flex: 1;
  min-height: 0;
  margin: 0;
  padding: 2px 0 0 4px;
  list-style: none;
  overflow: hidden;
  color: #1c1c28;
  font-family: "DejaVu Sans Condensed", "Noto Sans", sans-serif;
  font-size: 16px;
}
.tree li {
  display: flex;
  align-items: center;
  height: 27px;
  white-space: nowrap;
}
.cell {
  position: relative;
  width: 29px;
  flex: none;
}
.node-icon {
  margin-left: 1px;
}
.node-name {
  margin-left: 6px;
  line-height: 27px;
}
.root .node-name {
  flex: 1;
  background: #f0f0f0;
  overflow: hidden;
}
.twisty {
  position: absolute;
  left: 7px;
  top: 9px;
  width: 13px;
  height: 13px;
  padding: 1px;
  border: 1px solid #8f8f8f;
  border-radius: 2px;
  background: linear-gradient(#fff, #e4e4e4);
}
.hscroll {
  height: 28px;
  padding: 12px 0 0 27px;
  border-top: 2px solid #fafafa;
  background: #f0f0f0;
}
.hscroll div {
  height: 3px;
  background: #858585;
}
.path-btns {
  display: flex;
  gap: 10px;
  padding: 5px 0 1px 2px;
  color: #000;
  font-size: 18px;
}
.path-btns button {
  width: 80px;
  height: 26px;
  border: 1px solid #c6ccd2;
  border-radius: 4px;
  background: #fdfdfd;
  white-space: nowrap;
}
.preview {
  display: flex;
  width: 314px;
  padding: 6px 13px 0 8px;
  border-top: 5px solid #7d7d7d;
  border-right: 4px solid #f3f3f3;
  background: #ddeefb;
}
.preview div {
  flex: 1;
  border: 2px solid #f4f9fd;
  border-bottom: 0;
}
.config {
  display: flex;
  flex-direction: column;
  flex: 1;
  margin-left: 9px;
  background: #ddeefb;
}
.config header {
  display: flex;
  align-items: center;
  justify-content: space-between;
  height: 29px;
  padding: 0 7px 3px 5px;
  background: #b9cfe8;
  font-size: 19px;
}
.config-body {
  display: grid;
  grid-template-columns: 1fr 1fr;
  flex: 1;
}
.config-body div + div {
  border-left: 1px solid #cfe0ee;
}
.progress {
  height: 17px;
  padding: 5px 0 4px 6px;
  border-top: 2px solid #d6dde3;
  background: #f1f6fa;
}
.progress div {
  height: 8px;
  background: #6a962b;
}
.status {
  height: 25px;
  border-bottom-left-radius: 6px;
  background: linear-gradient(#abc9f1, #c9dcf8);
}
</style>
